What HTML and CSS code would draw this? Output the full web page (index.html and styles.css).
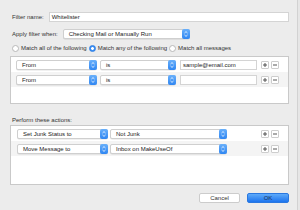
FILE: index.html
```html
<!DOCTYPE html>
<html>
<head>
<meta charset="utf-8">
<link rel="stylesheet" href="styles.css">
</head>
<body>
<div class="window">
  <div class="line first">
    <span class="label">Filter name:</span>
    <div class="field grow">Whitelister</div>
  </div>
  <div class="line apply">
    <span class="label">Apply filter when:</span>
    <div class="popup w-when"><span class="ptext">Checking Mail or Manually Run</span><span class="arrows"><svg viewBox="0 0 8 10" width="8" height="10"><path d="M2.5 4 L4 2.6 L5.5 4 M2.5 6 L4 7.4 L5.5 6" fill="none" stroke="#fff" stroke-width="0.8"/></svg></span></div>
  </div>
  <div class="line radios">
    <span class="radio"></span><span class="rlabel">Match all of the following</span>
    <span class="radio on"></span><span class="rlabel">Match any of the following</span>
    <span class="radio"></span><span class="rlabel">Match all messages</span>
  </div>

  <div class="box criteria">
    <div class="row">
      <div class="popup w-from"><span class="ptext">From</span><span class="arrows"><svg viewBox="0 0 8 10" width="8" height="10"><path d="M2.5 4 L4 2.6 L5.5 4 M2.5 6 L4 7.4 L5.5 6" fill="none" stroke="#fff" stroke-width="0.8"/></svg></span></div>
      <div class="popup w-is"><span class="ptext">is</span><span class="arrows"><svg viewBox="0 0 8 10" width="8" height="10"><path d="M2.5 4 L4 2.6 L5.5 4 M2.5 6 L4 7.4 L5.5 6" fill="none" stroke="#fff" stroke-width="0.8"/></svg></span></div>
      <div class="field w-value">sample@email.com</div>
      <div class="pm">
        <span class="sq"><svg viewBox="0 0 8 8" width="8" height="8"><path d="M2 4 H6 M4 2 V6" stroke="#444" stroke-width="0.9"/></svg></span>
        <span class="sq"><svg viewBox="0 0 8 8" width="8" height="8"><path d="M2 4 H6" stroke="#444" stroke-width="0.9"/></svg></span>
      </div>
    </div>
    <div class="row alt">
      <div class="popup w-from"><span class="ptext">From</span><span class="arrows"><svg viewBox="0 0 8 10" width="8" height="10"><path d="M2.5 4 L4 2.6 L5.5 4 M2.5 6 L4 7.4 L5.5 6" fill="none" stroke="#fff" stroke-width="0.8"/></svg></span></div>
      <div class="popup w-is"><span class="ptext">is</span><span class="arrows"><svg viewBox="0 0 8 10" width="8" height="10"><path d="M2.5 4 L4 2.6 L5.5 4 M2.5 6 L4 7.4 L5.5 6" fill="none" stroke="#fff" stroke-width="0.8"/></svg></span></div>
      <div class="field w-value"></div>
      <div class="pm">
        <span class="sq"><svg viewBox="0 0 8 8" width="8" height="8"><path d="M2 4 H6 M4 2 V6" stroke="#444" stroke-width="0.9"/></svg></span>
        <span class="sq"><svg viewBox="0 0 8 8" width="8" height="8"><path d="M2 4 H6" stroke="#444" stroke-width="0.9"/></svg></span>
      </div>
    </div>
  </div>

  <div class="line perform"><span class="label">Perform these actions:</span></div>

  <div class="box actions">
    <div class="row act">
      <div class="popup w-act"><span class="ptext">Set Junk Status to</span><span class="arrows"><svg viewBox="0 0 8 10" width="8" height="10"><path d="M2.5 4 L4 2.6 L5.5 4 M2.5 6 L4 7.4 L5.5 6" fill="none" stroke="#fff" stroke-width="0.8"/></svg></span></div>
      <div class="popup w-target"><span class="ptext">Not Junk</span><span class="arrows"><svg viewBox="0 0 8 10" width="8" height="10"><path d="M2.5 4 L4 2.6 L5.5 4 M2.5 6 L4 7.4 L5.5 6" fill="none" stroke="#fff" stroke-width="0.8"/></svg></span></div>
      <div class="pm">
        <span class="sq"><svg viewBox="0 0 8 8" width="8" height="8"><path d="M2 4 H6 M4 2 V6" stroke="#444" stroke-width="0.9"/></svg></span>
        <span class="sq"><svg viewBox="0 0 8 8" width="8" height="8"><path d="M2 4 H6" stroke="#444" stroke-width="0.9"/></svg></span>
      </div>
    </div>
    <div class="row act alt">
      <div class="popup w-act"><span class="ptext">Move Message to</span><span class="arrows"><svg viewBox="0 0 8 10" width="8" height="10"><path d="M2.5 4 L4 2.6 L5.5 4 M2.5 6 L4 7.4 L5.5 6" fill="none" stroke="#fff" stroke-width="0.8"/></svg></span></div>
      <div class="popup w-target"><span class="ptext">Inbox on MakeUseOf</span><span class="arrows"><svg viewBox="0 0 8 10" width="8" height="10"><path d="M2.5 4 L4 2.6 L5.5 4 M2.5 6 L4 7.4 L5.5 6" fill="none" stroke="#fff" stroke-width="0.8"/></svg></span></div>
      <div class="pm">
        <span class="sq"><svg viewBox="0 0 8 8" width="8" height="8"><path d="M2 4 H6 M4 2 V6" stroke="#444" stroke-width="0.9"/></svg></span>
        <span class="sq"><svg viewBox="0 0 8 8" width="8" height="8"><path d="M2 4 H6" stroke="#444" stroke-width="0.9"/></svg></span>
      </div>
    </div>
  </div>

  <div class="buttons">
    <div class="btn cancel">Cancel</div>
    <div class="btn ok">OK</div>
  </div>
</div>
</body>
</html>
```

FILE: styles.css
```css
html, body {
  margin: 0;
  padding: 0;
  background: #e6e6e6;
}
.window {
  width: 298px;
  height: 210px;
  box-sizing: border-box;
  background: #ececec;
  border-right: 1px solid #d2d2d2;
  padding: 12px 8px 0 10px;
  font-family: "Liberation Sans", Arial, sans-serif;
  font-size: 6px;
  color: #333;
  display: flex;
  flex-direction: column;
}
.line {
  display: flex;
  align-items: center;
  padding-left: 2px;
  gap: 5px;
}
.first { height: 10px; }
.apply { height: 10px; margin-top: 7px; }
.radios { height: 8px; margin-top: 5px; gap: 0; }
.perform { height: 8px; margin-top: 12px; }
.label { white-space: nowrap; line-height: 8px; }

.field {
  height: 10px;
  box-sizing: border-box;
  background: #fff;
  border: 1px solid #d4d4d4;
  padding: 0 2px;
  line-height: 8px;
  color: #222;
  white-space: nowrap;
  overflow: hidden;
}
.grow { flex: 1; }

.popup {
  height: 10px;
  box-sizing: border-box;
  background: #fff;
  border: 1px solid #cfcfcf;
  border-radius: 2px;
  box-shadow: 0 0.5px 0.5px rgba(0,0,0,0.12);
  display: flex;
  align-items: center;
  color: #222;
  flex: none;
}
.ptext {
  flex: 1;
  padding-left: 5px;
  line-height: 8px;
  white-space: nowrap;
  overflow: hidden;
}
.arrows {
  width: 8px;
  height: 10px;
  margin: -1px -1px -1px 0;
  border-radius: 2px;
  background: linear-gradient(#69b0fb, #2f86f2);
  display: flex;
}
.w-when { width: 127px; margin-left: 0; }
.w-from { width: 81px; }
.w-is { width: 76px; margin-left: 3px; }
.w-value { width: 77px; margin-left: 4px; }
.w-act { width: 91px; }
.w-target { width: 117px; margin-left: 2px; }

.radio {
  width: 7px;
  height: 7px;
  box-sizing: border-box;
  border-radius: 50%;
  background: #fff;
  border: 1px solid #b8b8b8;
  margin-right: 2px;
  flex: none;
}
.radio.on {
  background: radial-gradient(circle, #fff 0 1.2px, #3b8ef3 1.6px);
  border-color: #2f7fe6;
}
.rlabel { margin-right: 2px; white-space: nowrap; line-height: 8px; }

.box {
  background: #fff;
  border: 1px solid #c9c9c9;
  display: flex;
  flex-direction: column;
}
.criteria { height: 48px; box-sizing: border-box; margin-top: 4px; }
.actions { height: 60px; box-sizing: border-box; margin-top: 1px; }

.row {
  height: 15px;
  box-sizing: border-box;
  display: flex;
  align-items: center;
  padding: 0 9px 0 5px;
}
.row.act { padding-left: 6px; }
.row.alt { background: #f4f4f4; }

.pm {
  margin-left: auto;
  display: flex;
  gap: 2px;
}
.sq {
  width: 8px;
  height: 8px;
  box-sizing: border-box;
  background: #fff;
  border: 1px solid #cdcdcd;
  border-radius: 1px;
  display: flex;
  align-items: center;
  justify-content: center;
}
.sq svg { margin: -1px; }

.buttons {
  display: flex;
  justify-content: flex-end;
  gap: 7px;
  margin-top: 8px;
}
.btn {
  height: 10px;
  box-sizing: border-box;
  border-radius: 2px;
  text-align: center;
  line-height: 9px;
  font-size: 6px;
}
.cancel {
  width: 41px;
  background: #fff;
  border: 1px solid #cccccc;
  color: #333;
}
.ok {
  width: 42px;
  background: linear-gradient(#5eaaf9, #1d74ee);
  border: 1px solid #2a78e0;
  color: #1d2f55;
}
```
